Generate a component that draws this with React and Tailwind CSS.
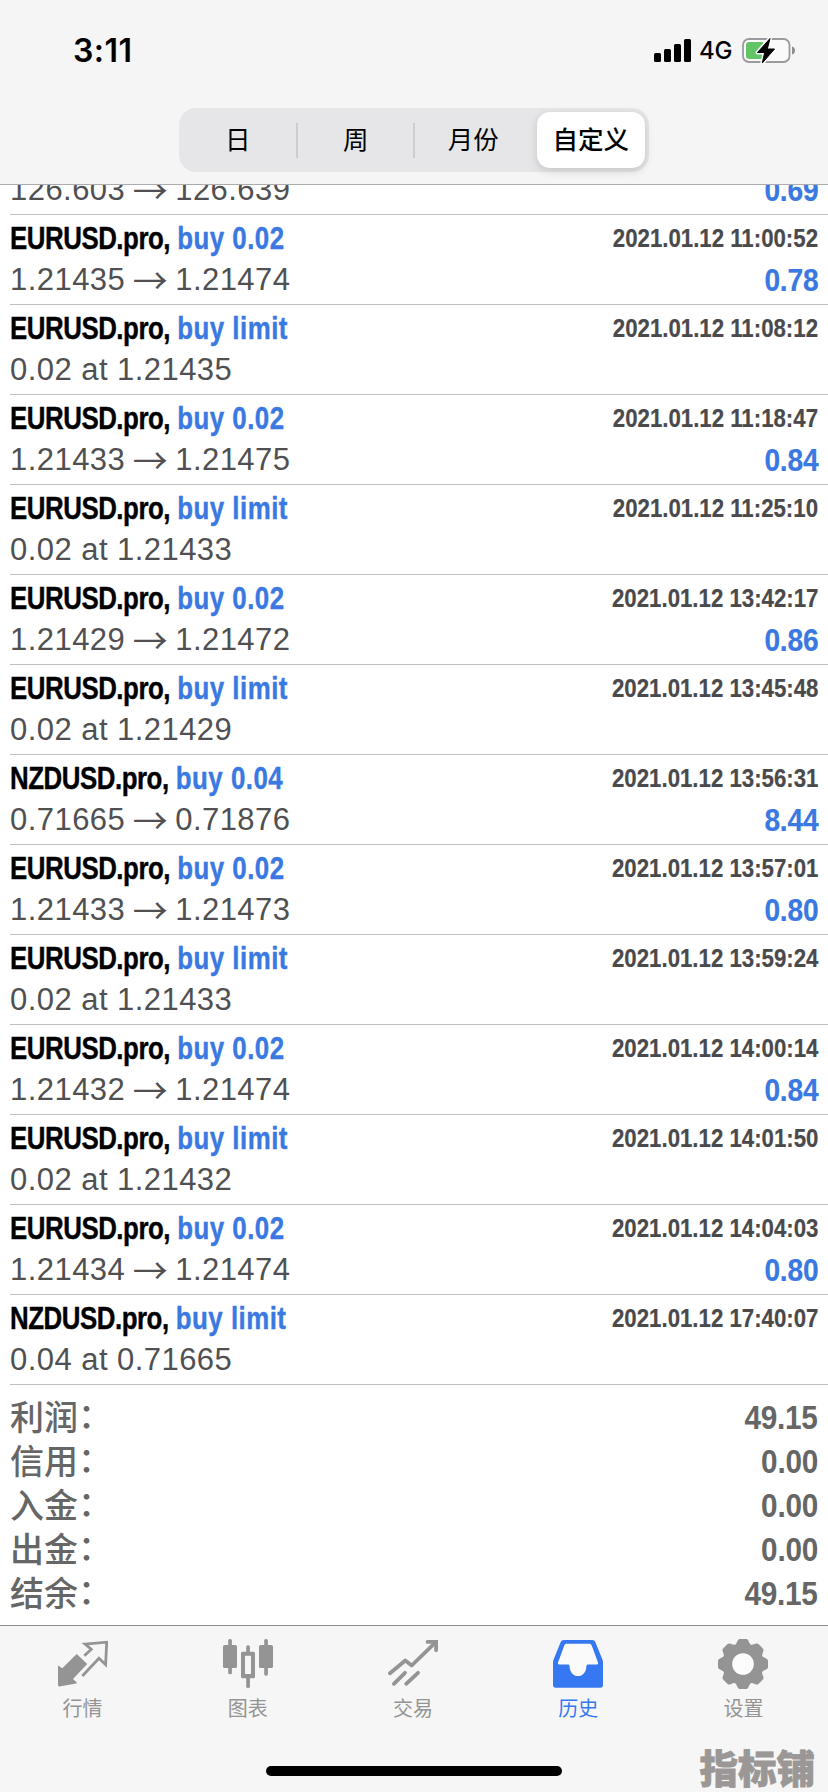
import { useState } from 'react';

const PERIODS = ['日', '周', '月份', '自定义'];

const DEALS = [
  { symbol: 'EURUSD.pro', side: 'buy 0.02', detail: ['1.21435', '1.21474'], time: '2021.01.12 11:00:52', profit: '0.78' },
  { symbol: 'EURUSD.pro', side: 'buy limit', detail: ['0.02 at 1.21435'], time: '2021.01.12 11:08:12' },
  { symbol: 'EURUSD.pro', side: 'buy 0.02', detail: ['1.21433', '1.21475'], time: '2021.01.12 11:18:47', profit: '0.84' },
  { symbol: 'EURUSD.pro', side: 'buy limit', detail: ['0.02 at 1.21433'], time: '2021.01.12 11:25:10' },
  { symbol: 'EURUSD.pro', side: 'buy 0.02', detail: ['1.21429', '1.21472'], time: '2021.01.12 13:42:17', profit: '0.86' },
  { symbol: 'EURUSD.pro', side: 'buy limit', detail: ['0.02 at 1.21429'], time: '2021.01.12 13:45:48' },
  { symbol: 'NZDUSD.pro', side: 'buy 0.04', detail: ['0.71665', '0.71876'], time: '2021.01.12 13:56:31', profit: '8.44' },
  { symbol: 'EURUSD.pro', side: 'buy 0.02', detail: ['1.21433', '1.21473'], time: '2021.01.12 13:57:01', profit: '0.80' },
  { symbol: 'EURUSD.pro', side: 'buy limit', detail: ['0.02 at 1.21433'], time: '2021.01.12 13:59:24' },
  { symbol: 'EURUSD.pro', side: 'buy 0.02', detail: ['1.21432', '1.21474'], time: '2021.01.12 14:00:14', profit: '0.84' },
  { symbol: 'EURUSD.pro', side: 'buy limit', detail: ['0.02 at 1.21432'], time: '2021.01.12 14:01:50' },
  { symbol: 'EURUSD.pro', side: 'buy 0.02', detail: ['1.21434', '1.21474'], time: '2021.01.12 14:04:03', profit: '0.80' },
  { symbol: 'NZDUSD.pro', side: 'buy limit', detail: ['0.04 at 0.71665'], time: '2021.01.12 17:40:07' },
];

const TOTALS = [
  ['利润', '49.15'],
  ['信用', '0.00'],
  ['入金', '0.00'],
  ['出金', '0.00'],
  ['结余', '49.15'],
];

function QuotesIcon() {
  return (
    <svg width="50" height="50" viewBox="0 0 50 50" fill="none">
      <path d="M18.7 16 28.2 25 14 40 18 43.7 1.3 46.7 0.5 45.7V27.5l3.8 2.8Z" fill="currentColor" stroke="currentColor" strokeWidth="1.5" strokeLinejoin="round" />
      <path d="M26.3 16.7 33.3 10.3 27 5 48.7 3.2 47.6 25.7 41 19.3 24.3 37" stroke="currentColor" strokeWidth="2.8" />
    </svg>
  );
}

function ChartIcon() {
  return (
    <svg width="50" height="50" viewBox="0 0 50 50" fill="currentColor">
      <rect x="0" y="6" width="14" height="23" rx="1.6" />
      <rect x="5.2" y="0" width="3.7" height="35.3" rx="1.6" />
      <rect x="36" y="6" width="14" height="23" rx="1.6" />
      <rect x="41.2" y="0" width="3.7" height="36.7" rx="1.6" />
      <path fillRule="evenodd" d="M19.6 12.7h10.8a1.6 1.6 0 0 1 1.6 1.6v23.4a1.6 1.6 0 0 1-1.6 1.6H19.6a1.6 1.6 0 0 1-1.6-1.6V14.3a1.6 1.6 0 0 1 1.6-1.6ZM22 16.7V35h6V16.7Z" />
      <rect x="23.2" y="6.3" width="3.7" height="9" rx="1.6" />
      <rect x="23.2" y="37" width="3.7" height="12" rx="1.6" />
    </svg>
  );
}

function TradeIcon() {
  return (
    <svg width="50" height="50" viewBox="0 0 50 50" fill="none" stroke="currentColor" strokeWidth="3.8" strokeLinecap="round">
      <path d="M2 34.3 17.3 21.5 23.7 26.5 47.5 3.4" strokeLinejoin="round" />
      <path d="M39.5 2.9H48.1V11.2" />
      <path d="M5.9 44.8 17 33.8M18.2 44.8 30 33.8" />
    </svg>
  );
}

function HistoryIcon() {
  return (
    <svg width="50" height="50" viewBox="0 0 50 50">
      <path fill="currentColor" d="M11 1H39c1.8 0 2.8.8 3.5 2.4L49.2 20c.5 1.4.8 2.6.8 4.3V46a2.8 2.8 0 0 1-2.8 2.8H2.8A2.8 2.8 0 0 1 0 46V24.3c0-1.7.3-2.9.8-4.3L7.5 3.4C8.2 1.8 9.2 1 11 1Z" />
      <path fill="#fafafa" d="M14 4.8H36c1.5 0 2.3.6 2.8 2L45 23.5c.3 1.2 0 1.9-1.2 1.9H35c-1.2 0-1.5.6-1.6 1.8C33.1 33.500 29.8 37 25 37s-8.1-3.5-8.4-9.800c-.1-1.2-.4-1.8-1.6-1.8H6.2C5 25.4 4.7 24.7 5 23.5L11.2 6.8c.5-1.4 1.3-2 2.8-2Z" />
    </svg>
  );
}

function SettingsIcon() {
  return (
    <svg width="50" height="50" viewBox="-25 -25 50 50" fill="currentColor">
      <circle r="15.7" fill="#fcfcfc" stroke="currentColor" strokeWidth="9.8" />
      {[0, 45, 90, 135, 180, 225, 270, 315].map((a) => (
        <path key={a} transform={`rotate(${a})`} d="M-9.5-17.5C-7-19.5-6.5-21-5.5-23c.6-1.4 1.3-2 2.7-2H2.8C4.2-25 4.9-24.4 5.5-23c1 2 1.5 3.5 4 5.5Z" />
      ))}
    </svg>
  );
}

function StatusBar() {
  return (
    <div className="flex h-[88px] items-center justify-between pl-[73px] pr-[33px] text-black font-['Inter',sans-serif]">
      <span className="mt-[14px] text-[32px] leading-none font-semibold tracking-[0.5px]">3:11</span>
      <div className="mt-3 flex items-center">
        <svg width="37" height="23" viewBox="0 0 37 23">
          <rect x="0" y="14" width="7" height="9" rx="1.5" />
          <rect x="10" y="10" width="7" height="13" rx="1.5" />
          <rect x="20" y="5" width="7" height="18" rx="1.5" />
          <rect x="30" y="0" width="7" height="23" rx="1.5" />
        </svg>
        <span className="ml-[8px] mt-[2px] w-[43px] text-[24px] leading-none font-medium tracking-[-0.3px]">4G</span>
        <svg width="53" height="27" viewBox="0 0 53 27">
          <rect x="1" y="2" width="46.5" height="23" rx="6" fill="#fafafa" stroke="#9b9b9f" strokeWidth="1.8" />
          <path d="M7 5H21V22H7a3 3 0 0 1-3-3V8a3 3 0 0 1 3-3Z" fill="#63c466" />
          <path d="M50 9.5c2 .5 3 2 3 4s-1 3.5-3 4Z" fill="#8e8e92" />
          <path d="M28 1.5 15.5 15.5H22.7L20.3 26 32.5 12H25.3Z" stroke="#fafafa" strokeWidth="4" strokeLinejoin="round" />
          <path d="M28 1.5 15.5 15.5H22.7L20.3 26 32.5 12H25.3Z" stroke="#000" strokeWidth="1" strokeLinejoin="round" />
        </svg>
      </div>
    </div>
  );
}

function Prices({ detail }) {
  return (
    <div className="flex items-center text-[31px] leading-[36px] tracking-[0.45px] text-[#505052]">
      <span>{detail[0]}</span>
      {detail[1] && (
        <>
          <span className="w-[50px] pb-[2px] text-center text-[35px] leading-[34px] tracking-normal font-['Noto_Sans_CJK_SC',sans-serif]">→</span>
          <span>{detail[1]}</span>
        </>
      )}
    </div>
  );
}

function Profit({ children }) {
  return <span className="mb-px origin-right scale-x-[0.88] text-[32px] leading-[36px] font-bold tracking-[-0.2px] text-[#3a78e2] [-webkit-text-stroke:0.2px]">{children}</span>;
}

function Deal({ deal }) {
  return (
    <li className="ml-[10px] h-[90px] border-b border-[#c0c0c2] pr-[10px] pt-[4px]">
      <div className="flex h-[38px] items-center justify-between whitespace-nowrap font-bold">
        <div className="origin-left scale-x-[0.82] text-[31.5px] leading-[36px] [-webkit-text-stroke:0.4px]">
          <span className="tracking-[-0.55px] text-black">{deal.symbol},</span>{' '}
          <span className="tracking-[0.6px] text-[#3a78e2]">{deal.side}</span>
        </div>
        <div className="origin-right scale-x-[0.855] text-[26px] leading-[36px] text-[#4a4a4c] [-webkit-text-stroke:0.2px]">{deal.time}</div>
      </div>
      <div className="flex h-[46px] items-center justify-between">
        <Prices detail={deal.detail} />
        {deal.profit && <Profit>{deal.profit}</Profit>}
      </div>
    </li>
  );
}

const TABS = [
  { label: '行情', Icon: QuotesIcon },
  { label: '图表', Icon: ChartIcon },
  { label: '交易', Icon: TradeIcon },
  { label: '历史', Icon: HistoryIcon },
  { label: '设置', Icon: SettingsIcon },
];

export default function App() {
  const [period, setPeriod] = useState('自定义');
  const [tab, setTab] = useState('历史');

  return (
    <div className="flex h-[1792px] w-[828px] flex-col overflow-hidden bg-white font-['Liberation_Sans','Noto_Sans_CJK_SC',sans-serif]">
      <header className="h-[185px] shrink-0 border-b border-[#acacae] bg-[#f5f5f6]">
        <StatusBar />
        <div className="mx-auto mt-5 grid h-16 w-[470px] grid-cols-4 rounded-[17px] bg-[#e6e6e8] py-1">
          {PERIODS.map((p, i) => (
            <div key={p} className={`flex items-center ${i === 1 || i === 2 ? '-ml-px bg-[linear-gradient(#cdcdd0,#cdcdd0)] bg-[length:2px_35px] bg-left bg-no-repeat pl-[2px]' : ''}`}>
              <button
                onClick={() => setPeriod(p)}
                className={`h-full flex-1 pb-[3px] whitespace-nowrap text-[25.5px] font-['Noto_Sans_CJK_SC',sans-serif] ${p === period ? 'mr-[4px] ml-[5px] rounded-[13px] bg-white font-medium shadow-[0_3px_10px_rgba(0,0,0,0.14)]' : ''}`}
              >
                {p}
              </button>
            </div>
          ))}
        </div>
      </header>

      <main className="flex-1 overflow-hidden">
        <div className="ml-[10px] flex h-[30px] items-end justify-between overflow-hidden border-b border-[#c0c0c2] pr-[10px]">
          <div className="flex h-[48px] w-full shrink-0 items-center justify-between">
            <Prices detail={['126.603', '126.639']} />
            <Profit>0.69</Profit>
          </div>
        </div>
        <ul>
          {DEALS.map((d) => <Deal key={d.time} deal={d} />)}
        </ul>
        <dl className="px-[10px] pt-[10px] text-[#666]">
          {TOTALS.map(([label, value]) => (
            <div key={label} className="flex h-[44px] items-center justify-between">
              <dt className="pb-[3px] text-[34px] leading-[41px] font-medium font-['Noto_Sans_CJK_SC',sans-serif]">
                {label}<span className="align-[2px] leading-none">：</span>
              </dt>
              <dd className="origin-right scale-x-[0.875] text-[34px] leading-[40px] font-bold tracking-[-0.3px]">{value}</dd>
            </div>
          ))}
        </dl>
      </main>

      <nav className="relative h-[167px] shrink-0 border-t border-[#8e8e90] bg-[#f6f6f6]">
        <div className="flex pt-[13px] pr-[2px]">
          {TABS.map(({ label, Icon }) => (
            <button
              key={label}
              onClick={() => setTab(label)}
              className={`flex flex-1 flex-col items-center ${label === tab ? 'text-[#3678f2]' : 'text-[#949494]'}`}
            >
              <Icon />
              <span className="mt-[5px] text-[20px] leading-[28px] font-['Noto_Sans_CJK_SC',sans-serif]">{label}</span>
            </button>
          ))}
        </div>
        <div className="mx-auto mt-[44px] h-[10px] w-[296px] rounded-full bg-black" />
        <span className="absolute right-[13px] bottom-[4px] text-[38.5px] leading-[44px] font-black text-[#9a9796] [-webkit-text-stroke:0.8px] font-['Noto_Sans_CJK_SC',sans-serif]">指标铺</span>
      </nav>
    </div>
  );
}
